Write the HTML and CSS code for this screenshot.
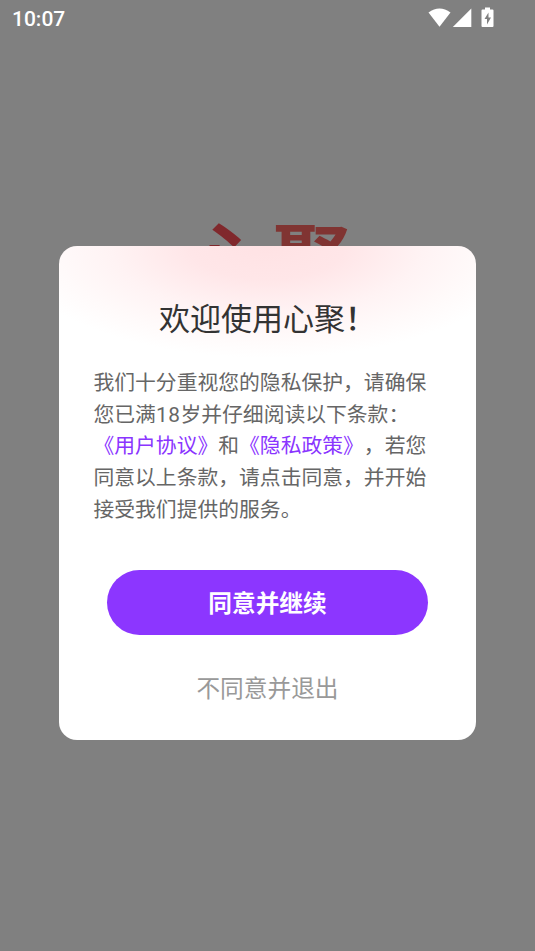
FILE: index.html
```html
<!DOCTYPE html>
<html lang="zh-CN">
<head>
<meta charset="utf-8">
<title>心聚</title>
<link rel="stylesheet" href="styles.css">
</head>
<body>
<div class="screen">
  <header class="status">
    <span class="time">10:07</span>
    <svg class="icons" width="68" height="24" viewBox="0 0 68 24" fill="#fff">
      <path d="M0.500 6.500Q11.500 -1.500 22.500 6.500L11.500 20.800Z"/>
      <path d="M43.300 2.500V21H24.800Z"/>
      <path fill-rule="evenodd" d="M57 1.500h5v2h2.500q1 0 1 1v15.500q0 1-1 1h-10q-1 0-1-1V4.500q0-1 1-1H57ZM60.500 6.500l-4 6.500h2.500V18.500l4-7h-2.500Z"/>
    </svg>
  </header>
  <div class="logo"><span>心</span><span class="logo-second">聚</span></div>
  <main class="dialog">
    <h1 class="title">欢迎使用心聚<span class="mark">！</span></h1>
    <p class="copy">我们十分重视您的隐私保护，请确保<br>您已满<span class="number">18</span>岁并仔细阅读以下条款：<br><a class="link">《用户协议》</a>和<a class="link">《隐私政策》</a>，若您<br>同意以上条款，请点击同意，并开始<br>接受我们提供的服务。</p>
    <button class="agree">同意并继续</button>
    <button class="decline">不同意并退出</button>
  </main>
</div>
</body>
</html>
```
FILE: styles.css
```css
* { box-sizing: border-box; }
body { margin: 0; background: #808080; font-family: Roboto, "Noto Sans CJK SC", sans-serif; text-spacing-trim: space-all; }
.screen { height: 951px; overflow: hidden; display: flex; flex-direction: column; align-items: center; }
.status { width: 100%; height: 36px; flex: none; display: flex; justify-content: space-between; align-items: center; padding: 0 39px 0 12px; color: #fff; }
.time { font-size: 21px; font-weight: 500; padding-top: 1px; }
.logo { display: flex; gap: 6px; margin: 185px 0 0 3px; height: 25px; flex: none; font-size: 80px; line-height: 84px; font-weight: 700; color: #80282c; }
.logo-second { color: #803432; }
.dialog { position: relative; width: 416.400px; height: 494.400px; flex: none; border-radius: 18px; padding: 51px 34px 0; display: flex; flex-direction: column; align-items: center; background: radial-gradient(ellipse 260px 112px at 50% 0, #ffe2e4 0%, #ffe6e8 30%, #fff3f4 60%, #fffafa 82%, #fff 100%) no-repeat #fff; }
.title { margin: 0; font-size: 31px; line-height: 46px; font-weight: 400; color: #333; }
.mark { font-weight: 500; }
.copy { margin: 25px 0 0; width: 348px; white-space: nowrap; font-size: 20.8px; line-height: 31.700px; font-weight: 400; color: #666; }
.number { letter-spacing: 0.600px; }
.link { color: #8a35ff; }
.agree, .decline { border: 0; font-family: inherit; font-size: 23.700px; padding: 0; }
.agree { margin-top: 43.500px; padding-bottom: 1px; width: 321px; height: 65.400px; flex: none; border-radius: 33px; background: #8c36ff; color: #fff; font-weight: 700; }
.decline { margin-top: 34px; height: 36px; background: transparent; color: #999; font-weight: 400; }
```
